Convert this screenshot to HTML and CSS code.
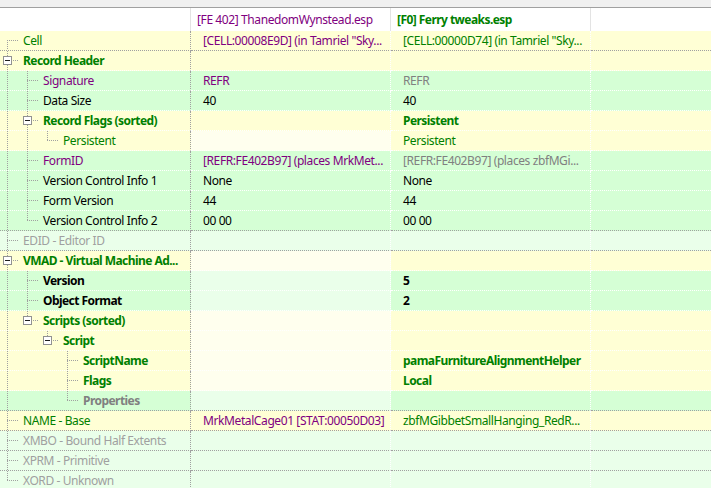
FILE: index.html
```html
<!DOCTYPE html>
<html>
<head>
<meta charset="utf-8">
<link rel="stylesheet" href="styles.css">
</head>
<body>
<div class="top"></div>
<div class="tree">
  <div class="row hdr">
    <div class="cell c0"></div>
    <div class="cell c1 purple">[FE 402] ThanedomWynstead.esp</div>
    <div class="cell c2 green b">[F0] Ferry tweaks.esp</div>
    <div class="cell c3"></div>
  </div>

  <div class="row sep">
    <div class="cell c0 y"><span class="s s-first"></span><span class="lbl green">Cell</span></div>
    <div class="cell c1 y purple">[CELL:00008E9D] (in Tamriel "Sky...</div>
    <div class="cell c2 y green">[CELL:00000D74] (in Tamriel "Sky...</div>
    <div class="cell c3 y"></div>
  </div>

  <div class="row">
    <div class="cell c0 y"><span class="s s-tee"><span class="box"></span></span><span class="lbl green b">Record Header</span></div>
    <div class="cell c1 y"></div>
    <div class="cell c2 y"></div>
    <div class="cell c3 y"></div>
  </div>

  <div class="row">
    <div class="cell c0 g"><span class="s s-v"></span><span class="s s-tee"></span><span class="lbl purple">Signature</span></div>
    <div class="cell c1 g purple">REFR</div>
    <div class="cell c2 g gray">REFR</div>
    <div class="cell c3 g"></div>
  </div>

  <div class="row">
    <div class="cell c0 g"><span class="s s-v"></span><span class="s s-tee"></span><span class="lbl">Data Size</span></div>
    <div class="cell c1 g">40</div>
    <div class="cell c2 g">40</div>
    <div class="cell c3 g"></div>
  </div>

  <div class="row">
    <div class="cell c0 y"><span class="s s-v"></span><span class="s s-tee"><span class="box"></span></span><span class="lbl green b">Record Flags (sorted)</span></div>
    <div class="cell c1 y"></div>
    <div class="cell c2 y green b">Persistent</div>
    <div class="cell c3 y"></div>
  </div>

  <div class="row">
    <div class="cell c0 y"><span class="s s-v"></span><span class="s s-v"></span><span class="s s-end"></span><span class="lbl green">Persistent</span></div>
    <div class="cell c1 ly"></div>
    <div class="cell c2 y green">Persistent</div>
    <div class="cell c3 y"></div>
  </div>

  <div class="row">
    <div class="cell c0 g"><span class="s s-v"></span><span class="s s-tee"></span><span class="lbl purple">FormID</span></div>
    <div class="cell c1 g purple">[REFR:FE402B97] (places MrkMet...</div>
    <div class="cell c2 g gray">[REFR:FE402B97] (places zbfMGi...</div>
    <div class="cell c3 g"></div>
  </div>

  <div class="row">
    <div class="cell c0 g"><span class="s s-v"></span><span class="s s-tee"></span><span class="lbl">Version Control Info 1</span></div>
    <div class="cell c1 g">None</div>
    <div class="cell c2 g">None</div>
    <div class="cell c3 g"></div>
  </div>

  <div class="row">
    <div class="cell c0 g"><span class="s s-v"></span><span class="s s-tee"></span><span class="lbl">Form Version</span></div>
    <div class="cell c1 g">44</div>
    <div class="cell c2 g">44</div>
    <div class="cell c3 g"></div>
  </div>

  <div class="row sep">
    <div class="cell c0 g"><span class="s s-v"></span><span class="s s-end"></span><span class="lbl">Version Control Info 2</span></div>
    <div class="cell c1 g">00 00</div>
    <div class="cell c2 g">00 00</div>
    <div class="cell c3 g"></div>
  </div>

  <div class="row sep">
    <div class="cell c0 lg"><span class="s s-tee"></span><span class="lbl lgray">EDID - Editor ID</span></div>
    <div class="cell c1 lg"></div>
    <div class="cell c2 lg"></div>
    <div class="cell c3 lg"></div>
  </div>

  <div class="row">
    <div class="cell c0 y"><span class="s s-tee"><span class="box"></span></span><span class="lbl green b">VMAD - Virtual Machine Ad...</span></div>
    <div class="cell c1 ly"></div>
    <div class="cell c2 y"></div>
    <div class="cell c3 y"></div>
  </div>

  <div class="row">
    <div class="cell c0 g"><span class="s s-v"></span><span class="s s-tee"></span><span class="lbl b">Version</span></div>
    <div class="cell c1 lg"></div>
    <div class="cell c2 g b">5</div>
    <div class="cell c3 g"></div>
  </div>

  <div class="row">
    <div class="cell c0 g"><span class="s s-v"></span><span class="s s-tee"></span><span class="lbl b">Object Format</span></div>
    <div class="cell c1 lg"></div>
    <div class="cell c2 g b">2</div>
    <div class="cell c3 g"></div>
  </div>

  <div class="row">
    <div class="cell c0 y"><span class="s s-v"></span><span class="s s-end"><span class="box"></span></span><span class="lbl green b">Scripts (sorted)</span></div>
    <div class="cell c1 ly"></div>
    <div class="cell c2 y"></div>
    <div class="cell c3 y"></div>
  </div>

  <div class="row">
    <div class="cell c0 y"><span class="s s-v"></span><span class="s"></span><span class="s s-end"><span class="box"></span></span><span class="lbl green b">Script</span></div>
    <div class="cell c1 ly"></div>
    <div class="cell c2 y"></div>
    <div class="cell c3 y"></div>
  </div>

  <div class="row">
    <div class="cell c0 y"><span class="s s-v"></span><span class="s"></span><span class="s"></span><span class="s s-tee"></span><span class="lbl green b">ScriptName</span></div>
    <div class="cell c1 ly"></div>
    <div class="cell c2 y green b">pamaFurnitureAlignmentHelper</div>
    <div class="cell c3 y"></div>
  </div>

  <div class="row">
    <div class="cell c0 y"><span class="s s-v"></span><span class="s"></span><span class="s"></span><span class="s s-tee"></span><span class="lbl green b">Flags</span></div>
    <div class="cell c1 ly"></div>
    <div class="cell c2 y green b">Local</div>
    <div class="cell c3 y"></div>
  </div>

  <div class="row sep">
    <div class="cell c0 g"><span class="s s-v"></span><span class="s"></span><span class="s"></span><span class="s s-end"></span><span class="lbl gray b">Properties</span></div>
    <div class="cell c1 lg"></div>
    <div class="cell c2 g"></div>
    <div class="cell c3 g"></div>
  </div>

  <div class="row sep">
    <div class="cell c0 y"><span class="s s-tee"></span><span class="lbl green">NAME - Base</span></div>
    <div class="cell c1 y purple">MrkMetalCage01 [STAT:00050D03]</div>
    <div class="cell c2 y green">zbfMGibbetSmallHanging_RedR...</div>
    <div class="cell c3 y"></div>
  </div>

  <div class="row sep">
    <div class="cell c0 lg"><span class="s s-tee"></span><span class="lbl lgray">XMBO - Bound Half Extents</span></div>
    <div class="cell c1 lg"></div>
    <div class="cell c2 lg"></div>
    <div class="cell c3 lg"></div>
  </div>

  <div class="row sep">
    <div class="cell c0 lg"><span class="s s-tee"></span><span class="lbl lgray">XPRM - Primitive</span></div>
    <div class="cell c1 lg"></div>
    <div class="cell c2 lg"></div>
    <div class="cell c3 lg"></div>
  </div>

  <div class="row sep">
    <div class="cell c0 lg"><span class="s s-end"></span><span class="lbl lgray">XORD - Unknown</span></div>
    <div class="cell c1 lg"></div>
    <div class="cell c2 lg"></div>
    <div class="cell c3 lg"></div>
  </div>
</div>
</body>
</html>
```

FILE: styles.css
```css
:root {
  --tl: #a0a0a0;
}
html, body {
  margin: 0;
  padding: 0;
  background: #ffffff;
  overflow: hidden;
}
body {
  font-family: "Noto Sans", "DejaVu Sans", sans-serif;
  font-size: 12px;
  letter-spacing: -0.4px;
  color: #000000;
}
.top {
  height: 7px;
  background: #f0f0f0;
  border-bottom: 1px solid #a0a0a0;
}
.tree {
  display: flex;
  flex-direction: column;
}
.row {
  display: grid;
  grid-template-columns: 191px 200px 200px 1fr;
  height: 20px;
}
.cell {
  box-sizing: border-box;
  height: 20px;
  border-bottom: 1px dotted #ffffff;
  border-right: 1px dotted #ffffff;
  line-height: 19px;
  white-space: nowrap;
  overflow: hidden;
  padding-left: 12px;
}
.c0 {
  padding-left: 0;
  border-right-color: #a0a0a0;
  display: flex;
  align-items: flex-start;
}
.c3 {
  border-right: none;
}
.row.sep .cell {
  border-bottom-color: #a0a0a0;
}
.row.hdr {
  height: 23px;
}
.row.hdr .cell {
  height: 23px;
  line-height: 23px;
  background: #ffffff;
  border-bottom: none;
  border-right: 1px solid #e3e3e3;
  padding-left: 6px;
}
.row.hdr .c3 {
  border-right: none;
}

/* backgrounds */
.y { background: #ffffd5; }
.g { background: #d5ffd5; }
.ly { background: #ffffee; }
.lg { background: #eaffea; }

/* text */
.green { color: #008000; }
.purple { color: #800080; }
.gray { color: #808080; }
.lgray { color: #a0a0a0; }
.b { font-weight: 700; letter-spacing: -0.55px; }

.lbl {
  margin-left: 3px;
}

/* tree guide slots */
.s {
  flex: none;
  width: 20px;
  height: 19px;
  display: flex;
  align-items: flex-start;
  background-repeat: no-repeat;
}
.s-v {
  background-image: repeating-linear-gradient(to bottom, var(--tl) 0 1px, transparent 1px 2px);
  background-size: 1px 19px;
  background-position: 7px 0;
}
.s-tee {
  background-image:
    repeating-linear-gradient(to bottom, var(--tl) 0 1px, transparent 1px 2px),
    repeating-linear-gradient(to right, var(--tl) 0 1px, transparent 1px 2px);
  background-size: 1px 19px, 12px 1px;
  background-position: 7px 0, 7px 9px;
}
.s-end {
  background-image:
    repeating-linear-gradient(to bottom, var(--tl) 0 1px, transparent 1px 2px),
    repeating-linear-gradient(to right, var(--tl) 0 1px, transparent 1px 2px);
  background-size: 1px 10px, 12px 1px;
  background-position: 7px 0, 7px 9px;
}
.s-first {
  background-image:
    repeating-linear-gradient(to bottom, var(--tl) 0 1px, transparent 1px 2px),
    repeating-linear-gradient(to right, var(--tl) 0 1px, transparent 1px 2px);
  background-size: 1px 10px, 12px 1px;
  background-position: 7px 9px, 7px 9px;
}
.box {
  box-sizing: border-box;
  width: 9px;
  height: 9px;
  margin: 5px 0 0 3px;
  border: 1px solid #919191;
  background: linear-gradient(#1c1c1c, #1c1c1c) center / 5px 1px no-repeat, #ffffff;
}
```
